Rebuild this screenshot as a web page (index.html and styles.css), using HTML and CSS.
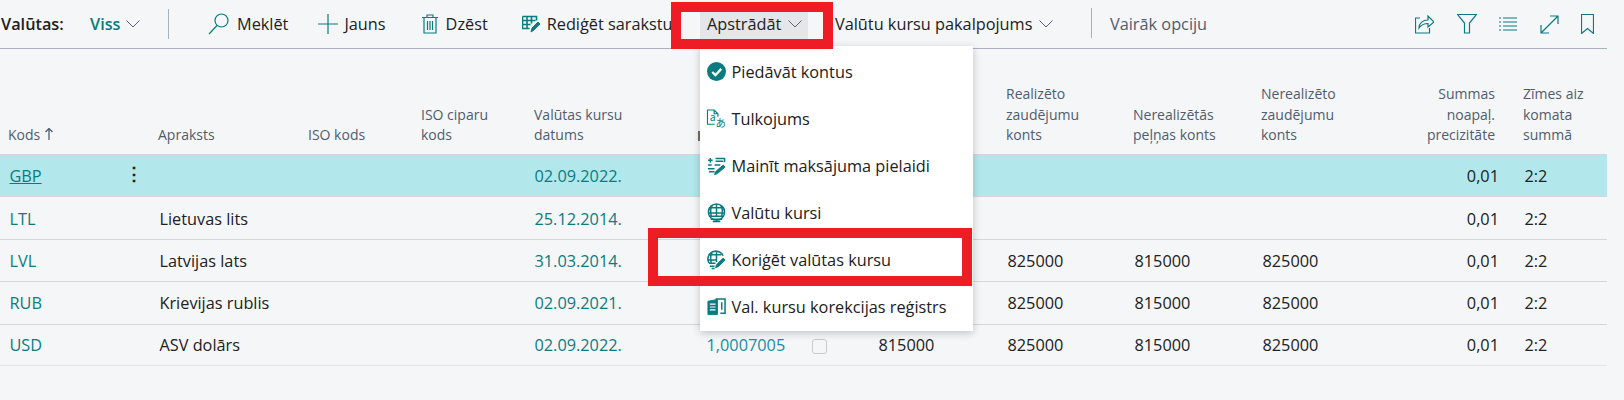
FILE: index.html
```html
<!DOCTYPE html>
<html lang="lv">
<head>
  <meta charset="UTF-8">
  <title>Valūtas</title>
  <link rel="stylesheet" href="styles.css">
</head>
<body>
<div class="page">
  <div class="toolbar">
    <span class="page-title">Valūtas:</span>
    <span class="view-name">Viss</span>
    <svg class="chev chev-view" viewBox="0 0 14 8"><path d="M.5.5 7 7 13.500.5"/></svg>
    <span class="sep sep-a"></span>
    <span class="tool tool-search">
      <svg class="ico" width="21" height="22" viewBox="0 0 21 22"><circle cx="13.500" cy="7.500" r="6.500"/><path d="M9 12.500 1 21"/></svg>Meklēt
    </span>
    <span class="tool tool-new">
      <svg class="ico" width="20" height="20" viewBox="0 0 20 20"><path d="M0 10h20M10 0v20"/></svg>Jauns
    </span>
    <span class="tool tool-del">
      <svg class="ico" width="16" height="20" viewBox="0 0 16 20"><path d="M0 3.500h16M5 3.500V1h6v2.500M2 3.500V19h12V3.500M5.500 7v9M8 7v9M10.500 7v9"/></svg>Dzēst
    </span>
    <span class="tool tool-edit">
      <svg class="ico" width="18" height="18" viewBox="0 0 18 18"><path class="thick" d="M.5 1.500h14v4M.5 1.500v12h7M.5 5.500h13M.5 9.500h8M5 1.500v12M9.500 1.500v7"/><path class="solid" d="m9 17 1-4 6-6 2 2-6 6z"/></svg>Rediģēt sarakstu
    </span>
    <span class="tool tool-open">Apstrādāt<svg class="chev" viewBox="0 0 14 8"><path d="M.5.5 7 7 13.500.5"/></svg></span>
    <span class="tool tool-rates">Valūtu kursu pakalpojums<svg class="chev" viewBox="0 0 14 8"><path d="M.5.5 7 7 13.500.5"/></svg></span>
    <span class="sep sep-b"></span>
    <span class="tool tool-more">Vairāk opciju</span>
    <span class="right-icons">
      <svg class="ico" width="19" height="19" viewBox="0 0 19 19"><path d="M5 3H.5v15h14v-5"/><path d="M4 13c0-5 4-8 9-8V1l6 6-6 5V8.500c-4 0-7 1.500-9 4.500z"/></svg>
      <svg class="ico" width="20" height="20" viewBox="0 0 20 20"><path d="M.5.5h19L12.500 9v10h-5V9z"/></svg>
      <svg class="ico" width="18" height="14" viewBox="0 0 18 14"><path d="M0 1h2M4 1h14M0 5h2M4 5h14M0 9h2M4 9h14M0 13h2M4 13h14"/></svg>
      <svg class="ico" width="19" height="19" viewBox="0 0 19 19"><path d="M1 18 18 1M10 1h8v8M1 10v8h8"/></svg>
      <svg class="ico" width="13" height="20" viewBox="0 0 13 20"><path d="M.5.500h12v19l-6-5-6 5z"/></svg>
    </span>
  </div>

  <div class="grid-row head-row">
    <div class="cell">Kods<svg class="sort-arrow" width="8" height="12" viewBox="0 0 8 12"><path d="M4 12V1M.5 4 4 .5 7.500 4"/></svg></div>
    <div class="cell">Apraksts</div>
    <div class="cell">ISO kods</div>
    <div class="cell">ISO ciparu<br>kods</div>
    <div class="cell">Valūtas kursu<br>datums</div>
    <div class="cell head-rate"><span class="head-stem"></span></div>
    <div class="cell"></div>
    <div class="cell"></div>
    <div class="cell">Realizēto<br>zaudējumu<br>konts</div>
    <div class="cell">Nerealizētās<br>peļņas konts</div>
    <div class="cell">Nerealizēto<br>zaudējumu<br>konts</div>
    <div class="cell right">Summas<br>noapaļ.<br>precizitāte</div>
    <div class="cell">Zīmes aiz<br>komata<br>summā</div>
  </div>

  <div class="grid-row data-row selected">
    <div class="cell link code underlined">GBP<span class="kebab">⋮</span></div>
    <div class="cell"></div><div class="cell"></div><div class="cell"></div>
    <div class="cell link date">02.09.2022.</div>
    <div class="cell"></div><div class="cell"></div><div class="cell"></div><div class="cell"></div><div class="cell"></div><div class="cell"></div>
    <div class="cell right">0,01</div>
    <div class="cell">2:2</div>
  </div>
  <div class="grid-row data-row">
    <div class="cell link code">LTL</div>
    <div class="cell">Lietuvas lits</div>
    <div class="cell"></div><div class="cell"></div>
    <div class="cell link date">25.12.2014.</div>
    <div class="cell"></div><div class="cell"></div><div class="cell"></div><div class="cell"></div><div class="cell"></div><div class="cell"></div>
    <div class="cell right">0,01</div>
    <div class="cell">2:2</div>
  </div>
  <div class="grid-row data-row">
    <div class="cell link code">LVL</div>
    <div class="cell">Latvijas lats</div>
    <div class="cell"></div><div class="cell"></div>
    <div class="cell link date">31.03.2014.</div>
    <div class="cell"></div><div class="cell"></div><div class="cell"></div>
    <div class="cell">825000</div>
    <div class="cell">815000</div>
    <div class="cell">825000</div>
    <div class="cell right">0,01</div>
    <div class="cell">2:2</div>
  </div>
  <div class="grid-row data-row">
    <div class="cell link code">RUB</div>
    <div class="cell">Krievijas rublis</div>
    <div class="cell"></div><div class="cell"></div>
    <div class="cell link date">02.09.2021.</div>
    <div class="cell"></div><div class="cell"></div><div class="cell"></div>
    <div class="cell">825000</div>
    <div class="cell">815000</div>
    <div class="cell">825000</div>
    <div class="cell right">0,01</div>
    <div class="cell">2:2</div>
  </div>
  <div class="grid-row data-row last">
    <div class="cell link code">USD</div>
    <div class="cell">ASV dolārs</div>
    <div class="cell"></div><div class="cell"></div>
    <div class="cell link date">02.09.2022.</div>
    <div class="cell rate-val">1,0007005</div>
    <div class="cell"><span class="checkbox"></span></div>
    <div class="cell">815000</div>
    <div class="cell">825000</div>
    <div class="cell">815000</div>
    <div class="cell">825000</div>
    <div class="cell right">0,01</div>
    <div class="cell">2:2</div>
  </div>

  <div class="menu">
    <div class="menu-item">
      <svg width="19" height="19" viewBox="0 0 18 18"><circle cx="9" cy="9" r="9" fill="#0b7b80"/><path d="m5 9.500 3 3 5.500-6" fill="none" stroke="#fff" stroke-width="2.200"/></svg>Piedāvāt kontus
    </div>
    <div class="menu-item">
      <svg class="ico ico-tr" width="19" height="20" viewBox="0 0 20 20"><path d="M8 15.500H.5V.5h7l4 4v3M7.500.5v4h4"/><text x="3" y="12.500" class="ico-text">a</text><text x="9" y="18.500" class="ico-text">あ</text></svg>Tulkojums
    </div>
    <div class="menu-item">
      <svg class="ico" width="19" height="20" viewBox="0 0 20 20"><path class="thick" d="M1 4h5M3.500 1.500v5M9 2h10M9 5h8M1 9h4M8 9h6M1 13h7M2 16h6M18.500 2v4"/><path class="solid" d="m8 19 1-3 8-7 2 2-8 7z"/></svg>Mainīt maksājuma pielaidi
    </div>
    <div class="menu-item">
      <svg class="ico" width="19" height="20" viewBox="0 0 20 20"><circle class="thick" cx="10" cy="9" r="8.500"/><path class="thick" d="M2 4.500h16M1 10h18M10 .5v13M5.500 2c-2 3-2 7-1 11M14.500 2c2 3 2 7 1 11M2 13.500h16M4 16.500h12M6 19h8"/></svg>Valūtu kursi
    </div>
    <div class="menu-item">
      <svg class="ico" width="19" height="20" viewBox="0 0 20 20"><path class="thick" d="M17 5.500A8.500 8.500 0 0 0 3 3.500 8.500 8.500 0 0 0 2 13M2 4.500h13M1 10h9M10 .5V12M5.500 2c-2 3-2 7-1 11M2 13.500h7M3 16.500h5M5 19h3"/><path class="solid" d="m9 18 1-3 7-7 2 2-7 7z"/></svg>Koriģēt valūtas kursu
    </div>
    <div class="menu-item">
      <svg class="ico" width="19" height="20" viewBox="0 0 20 20"><path class="thick" d="M9 1.500h10v15h-5M15.500 5v8"/><path d="M1 4l10-2v16H1z" class="fill"/><path class="white" d="M3 7h6M3 10h6M3 13h6"/></svg>Val. kursu korekcijas reģistrs
    </div>
  </div>

  <div class="red-box red-top"></div>
  <div class="red-box red-item"></div>
</div>
</body>
</html>
```

FILE: styles.css
```css
*{
  box-sizing: border-box;
}
html, body{
  margin: 0;
  height: 100%;
  overflow: hidden;
}
body{
  background-color: #f5f6f8;
  font-family: "Open Sans", "Liberation Sans", sans-serif;
  font-size: 16.300px;
  color: #212121;
}
.page{
  position: relative;
  height: 400px;
  width: 1624px;
}

/* top bar */
.toolbar{
  display: flex;
  align-items: center;
  height: 49px;
  width: 1607px;
  border-bottom: 1px solid #a9b2bd;
  white-space: nowrap;
}
.page-title{
  margin-left: 1px;
  width: 89px;
  font-weight: 600;
}
.view-name{
  width: 36px;
  color: #0b7b80;
  font-weight: 600;
}
.chev{
  width: 14px;
  height: 8px;
  margin-left: 7px;
  fill: none;
  stroke: #5b6470;
  stroke-width: 1;
}
.chev-view{
  margin-left: 0;
}
.sep{
  width: 1px;
  height: 30px;
  background-color: #a9b2bd;
}
.sep-a{
  margin-left: 28px;
}
.tool{
  display: flex;
  align-items: center;
}
.ico{
  fill: none;
  stroke: #0b7b80;
  stroke-width: 1.200;
}
.ico .thick{
  stroke-width: 1.600;
}
.ico .solid,
.ico .fill{
  fill: #0b7b80;
  stroke-width: 1;
}
.ico .white{
  stroke: #fff;
}
.ico-tr{
  overflow: visible;
}
.ico-text{
  font-size: 11px;
  fill: #0b7b80;
  stroke: none;
  font-family: "Noto Sans CJK JP", "Noto Sans", sans-serif;
}
.tool-search{
  margin-left: 39px;
  gap: 8px;
}
.tool-new{
  margin-left: 30px;
  gap: 6px;
}
.tool-del{
  margin-left: 36px;
  gap: 8px;
}
.tool-edit{
  margin-left: 34px;
  gap: 7px;
}
.tool-open{
  position: absolute;
  left: 700px;
  top: 2px;
  width: 108px;
  height: 44px;
  padding-left: 7px;
  background-color: #e4e6e9;
}
.tool-rates{
  position: absolute;
  left: 835px;
  top: 2px;
  height: 44px;
}
.sep-b{
  position: absolute;
  left: 1091px;
  top: 8px;
}
.tool-more{
  position: absolute;
  left: 1110px;
  top: 2px;
  height: 44px;
  color: #505c6d;
}
.right-icons{
  display: flex;
  align-items: center;
  gap: 22.500px;
  margin-left: auto;
  padding-right: 13px;
}

/* list */
.grid-row{
  display: grid;
  grid-template-columns: 151px 150px 113px 113px 171px 107px 65px 129px 127px 128px 140px 122px 1fr;
  width: 1607px;
}
.head-row{
  height: 105px;
  align-items: end;
  color: #505c6d;
  font-size: 14px;
  line-height: 20.700px;
  padding-bottom: 8px;
}
.head-row .cell{
  padding: 0 0 0 7px;
}
.head-row .cell:first-child{
  padding-left: 8px;
}
.head-row .head-rate{
  padding-left: 0;
}
.head-stem{
  display: block;
  width: 1.500px;
  height: 10px;
  margin-bottom: 5px;
  background-color: #7a6a60;
}
.sort-arrow{
  margin-left: 5px;
  fill: none;
  stroke: #505c6d;
  stroke-width: 1.300;
}
.data-row{
  height: 42.400px;
  align-items: center;
  padding-top: 1px;
  border-top: 1px solid #d5d6d9;
}
.data-row .cell{
  padding-left: 8.500px;
}
.data-row .code{
  padding-left: 9.500px;
}
.data-row .date{
  padding-left: 7.500px;
}
.data-row.selected{
  background-color: #b2e8ec;
}
.data-row.last{
  border-bottom: 1px solid #e4e5e7;
}
.link{
  color: #0b7b80;
}
.underlined{
  text-decoration: underline;
}
.code{
  position: relative;
}
.kebab{
  position: absolute;
  left: 125px;
  top: -4px;
  color: #212121;
  font-size: 18px;
  font-weight: 700;
  text-decoration: none;
  display: inline-block;
}
.head-row .right{
  text-align: right;
  padding-right: 21px;
}
.data-row .right{
  text-align: right;
  padding-right: 17px;
}
.rate-val{
  color: #1a8ca3;
}
.checkbox{
  display: inline-block;
  width: 15px;
  height: 15px;
  margin-left: -2px;
  border: 1px solid #c8cacd;
  border-radius: 3px;
  vertical-align: middle;
}

/* dropdown */
.menu{
  position: absolute;
  left: 700px;
  top: 46px;
  width: 273px;
  height: 285px;
  padding-top: 2px;
  background-color: #fff;
  box-shadow: 0 2px 8px rgba(0, 0, 0, 0.22);
  display: flex;
  flex-direction: column;
}
.menu-item{
  flex: 1;
  display: flex;
  align-items: center;
  gap: 5.500px;
  padding-left: 7px;
}
.menu-item svg{
  flex: none;
}

/* red highlight frames */
.red-box{
  position: absolute;
  border: 10px solid #ee1c25;
}
.red-top{
  left: 671px;
  top: 2px;
  width: 162px;
  height: 47px;
}
.red-item{
  left: 648px;
  top: 228px;
  width: 324px;
  height: 58px;
}
```
